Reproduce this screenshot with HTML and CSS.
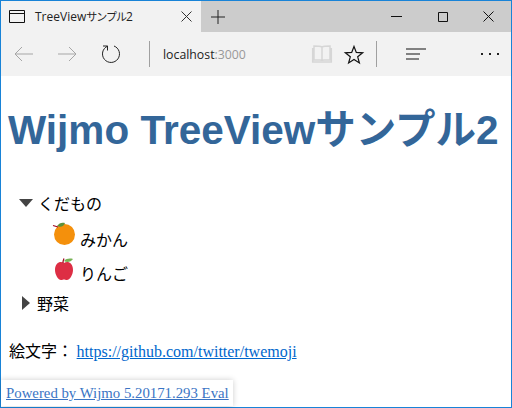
FILE: index.html
```html
<!DOCTYPE html>
<html lang="ja">
<head>
    <meta charset="UTF-8">
    <title>TreeViewサンプル2</title>
    <link rel="stylesheet" href="styles.css">
</head>
<body>
    <div class="window">
        <div class="tabstrip">
            <div class="tab">
                <svg class="tab-icon" width="16" height="13" viewBox="0 0 16 13" fill="none" stroke="#111"><path d="M.5.5h15v12H.5zM.5 3.500h15"/></svg>
                <span class="tab-title">TreeView<span class="kana">サンプル</span>2</span>
                <svg class="tab-close" width="11" height="11" viewBox="0 0 11 11" stroke="#333" fill="none"><path d="M.5.5l10 10M10.500.5l-10 10"/></svg>
            </div>
            <svg class="new-tab" width="14" height="14" viewBox="0 0 14 14" stroke="#222" fill="none"><path d="M7 0v14M0 7h14"/></svg>
            <div class="win-buttons">
                <svg width="11" height="11" viewBox="0 0 11 11" stroke="#111" fill="none"><path d="M0 5.500h11"/></svg>
                <svg width="11" height="11" viewBox="0 0 11 11" stroke="#111" fill="none"><path d="M1.500 1.500h9v9h-9z"/></svg>
                <svg width="11" height="11" viewBox="0 0 11 11" stroke="#111" fill="none"><path d="M.5.5l10 10M10.500.5l-10 10"/></svg>
            </div>
        </div>
        <div class="toolbar">
            <svg class="nav-back" width="20" height="16" viewBox="0 0 20 16" stroke="#a6a6a6" fill="none"><path d="M19 8H1M8 1L1 8l7 7"/></svg>
            <svg class="nav-forward" width="20" height="16" viewBox="0 0 20 16" stroke="#a6a6a6" fill="none"><path d="M1 8h18M12 1l7 7-7 7"/></svg>
            <svg class="nav-reload" width="20" height="20" viewBox="0 0 20 20" stroke="#222" fill="none"><path d="M6.500 2.200A8.500 8.500 0 1 0 13 2M6.500 6.500V2H2"/></svg>
            <div class="divider first"></div>
            <div class="address">localhost<span class="port">:3000</span></div>
            <svg class="reading" width="20" height="18" viewBox="0 0 20 18" stroke="#d6d6d6" stroke-width="1.500" fill="none"><path d="M10 2C8 1 4 1 2 1v14h6c1 0 2 .5 2 1 0-.5 1-1 2-1h6V1c-2 0-6 0-8 1zM10 2v14M.7 3v14h18.600V3"/></svg>
            <svg class="star" width="20" height="19" viewBox="0 0 20 19" stroke="#111" stroke-width="1.200" fill="none"><path d="M10 1.500l2.300 5.900 6.400.4-5 4 1.700 6.200-5.400-3.500-5.400 3.500 1.700-6.200-5-4 6.400-.4z"/></svg>
            <div class="divider second"></div>
            <svg class="hub" width="20" height="12" viewBox="0 0 20 12" stroke="#111" fill="none"><path d="M0 1h20M0 6h14M0 11h13"/></svg>
            <div class="more"><i></i><i></i><i></i></div>
        </div>
        <div class="content">
            <h1>Wijmo TreeViewサンプル2</h1>
            <div class="tree">
                <div class="node">
                    <span class="arrow-down"></span>くだもの
                </div>
                <div class="child first-child">
                    <svg class="emoji" width="22" height="22" viewBox="0 0 22 22">
                        <circle cx="11.500" cy="11.500" r="10.500" fill="#f4900c"/>
                        <path d="M4 3c2-3 5-4 8-3-1 3-4 5-8 3z" fill="#5c913b"/>
                        <path d="M5 4L0 2.500" stroke="#a0041e" stroke-width="1.200"/>
                    </svg>
                    <span>みかん</span>
                </div>
                <div class="child">
                    <svg class="emoji" width="22" height="22" viewBox="0 0 22 22">
                        <path d="M11 6C8 3.500 2 5 2 13c0 5 3.500 10 6 10 1.500 0 2-.5 3-.5s1.500.5 3 .5c2.500 0 6-5 6-10 0-8-6-9.500-9-7z" fill="#dd2e44"/>
                        <path d="M11 4c2-2.500 6-3 9-2-2 3-6 4-9 2z" fill="#77b255"/>
                        <path d="M10 6c0-1.500.3-3 1-4.500" stroke="#a0041e" stroke-width="1.200" fill="none"/>
                    </svg>
                    <span>りんご</span>
                </div>
                <div class="node closed">
                    <span class="arrow-right"></span>野菜
                </div>
            </div>
            <p class="credit">絵文字： <a href="#">https://github.com/twitter/twemoji</a></p>
            <a class="powered" href="#">Powered by Wijmo 5.20171.293 Eval</a>
        </div>
    </div>
</body>
</html>
```

FILE: styles.css
```css
* {
    box-sizing: border-box;
}
html, body {
    margin: 0;
    padding: 0;
    height: 100%;
    overflow: hidden;
}
body {
    font-family: "Noto Sans CJK JP", "Liberation Sans", sans-serif;
    background-color: #ffffff;
}
svg {
    display: block;
    flex: none;
    overflow: visible;
}
.window {
    height: 408px;
    display: flex;
    flex-direction: column;
    border: 1px solid #1883d7;
}
.tabstrip {
    height: 31px;
    display: flex;
    align-items: center;
    background-color: #cccccc;
}
.tab {
    width: 200px;
    height: 31px;
    display: flex;
    align-items: center;
    padding-left: 8px;
    background-color: #f2f2f2;
}
.tab-title {
    margin-left: 10px;
    width: 146px;
    font-size: 12px;
    color: #222222;
    white-space: nowrap;
}
.tab-title, .address {
    font-family: "Open Sans", "Noto Sans CJK JP", sans-serif;
}
.kana {
    font-size: 11px;
    letter-spacing: -1px;
}
.new-tab {
    margin-left: 10px;
}
.win-buttons {
    margin-left: auto;
    padding-right: 17px;
    display: flex;
    gap: 35px;
}
.toolbar {
    height: 44px;
    display: flex;
    align-items: center;
    background-color: #f2f2f2;
}
.nav-back {
    margin-left: 13px;
}
.nav-forward {
    margin-left: 23px;
}
.nav-reload {
    margin-left: 24px;
}
.divider {
    width: 1px;
    height: 26px;
    background-color: #a0a0a0;
}
.divider.first {
    margin-left: 28px;
}
.address {
    margin-left: 13px;
    width: 149px;
    font-size: 12.300px;
    color: #222222;
}
.port {
    color: #999999;
}
.star {
    margin-left: 12px;
}
.divider.second {
    margin-left: 12px;
}
.hub {
    margin-left: 29px;
}
.more {
    margin-left: 55px;
    display: flex;
    gap: 6px;
}
.more i {
    width: 2px;
    height: 2px;
    background-color: #222222;
}
.content {
    flex: 1;
    min-height: 0;
    display: flex;
    flex-direction: column;
    background-color: #ffffff;
}
h1 {
    margin: 26px 0 0 7px;
    font-family: "Liberation Sans", "Noto Sans CJK JP", sans-serif;
    font-size: 40.500px;
    line-height: 56px;
    font-weight: bold;
    color: #336699;
    white-space: nowrap;
}
.tree {
    margin-top: 32px;
    padding-left: 18px;
    font-size: 16px;
    color: #000000;
}
.node {
    height: 26px;
    display: flex;
    align-items: center;
}
.arrow-down {
    width: 0;
    height: 0;
    margin-right: 5px;
    border-left: 7px solid transparent;
    border-right: 7px solid transparent;
    border-top: 8px solid #444444;
}
.arrow-right {
    width: 0;
    height: 0;
    margin: 0 7px 0 3px;
    border-top: 7px solid transparent;
    border-bottom: 7px solid transparent;
    border-left: 8px solid #444444;
}
.child {
    height: 34px;
    display: flex;
    align-items: center;
    padding-left: 34px;
}
.first-child {
    margin-top: 6px;
}
.child span {
    margin-left: 5px;
}
.emoji {
    margin-bottom: 10px;
}
.credit {
    margin: 24px 0 0 8px;
    font-size: 16px;
    line-height: 20px;
}
.credit a {
    font-family: "Liberation Serif", serif;
    color: #0066cc;
}
.powered {
    margin-top: auto;
    margin-bottom: 1px;
    align-self: flex-start;
    padding: 3px 4px 3px 5px;
    font-family: "Liberation Serif", serif;
    font-size: 14.800px;
    line-height: 20px;
    color: #3a74c4;
    background-color: #ffffff;
    box-shadow: 0 0 6px rgba(0, 0, 0, 0.2);
}
```
